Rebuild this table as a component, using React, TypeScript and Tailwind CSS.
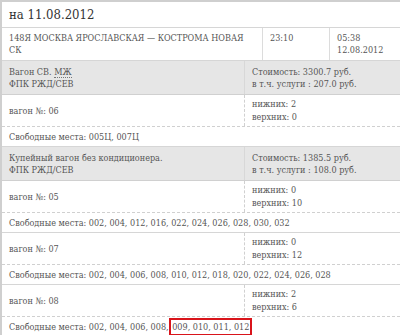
import React from 'react';

interface Car {
  num: string;
  lower: number;
  upper: number;
  seats: string[];
  marked?: string[];
}

interface CarClass {
  title: React.ReactNode;
  carrier: string;
  price: string;
  service: string;
  cars: Car[];
}

const classes: CarClass[] = [
  {
    title: (
      <>
        Вагон СВ.{' '}
        <span className="border-b border-dotted border-[#777]">МЖ</span>
      </>
    ),
    carrier: 'ФПК РЖД/СЕВ',
    price: '3300.7',
    service: '207.0',
    cars: [{ num: '06', lower: 2, upper: 0, seats: ['005Ц', '007Ц'] }],
  },
  {
    title: 'Купейный вагон без кондиционера.',
    carrier: 'ФПК РЖД/СЕВ',
    price: '1385.5',
    service: '108.0',
    cars: [
      {
        num: '05',
        lower: 0,
        upper: 10,
        seats: ['002', '004', '012', '016', '022', '024', '026', '028', '030', '032'],
      },
      {
        num: '07',
        lower: 0,
        upper: 12,
        seats: ['002', '004', '006', '008', '010', '012', '018', '020', '022', '024', '026', '028'],
      },
      {
        num: '08',
        lower: 2,
        upper: 6,
        seats: ['002', '004', '006', '008'],
        marked: ['009', '010', '011', '012'],
      },
    ],
  },
];

export default function App() {
  return (
    <div
      className="w-[400px] h-[335px] overflow-hidden bg-white text-[#555] text-[9px] leading-[12px] border-l-2 border-t-2 border-[#cfcfcf]"
      style={{ fontFamily: '"DejaVu Serif Condensed", "DejaVu Serif", serif' }}
    >
      {/* Date header */}
      <div className="h-[26px] flex items-center px-[7px] text-[13px] text-[#333] border-b border-[#d6d6d6]">
        на 11.08.2012
      </div>

      {/* Train */}
      <div className="flex border-b border-[#d6d6d6]">
        <div className="w-[261px] px-[7px] py-[4px] border-r border-[#dcdcdc]">
          148Я МОСКВА ЯРОСЛАВСКАЯ — КОСТРОМА НОВАЯ СК
        </div>
        <div className="w-[67px] px-[7px] py-[4px] border-r border-[#dcdcdc]">23:10</div>
        <div className="flex-1 px-[7px] py-[4px]">
          05:38
          <br />
          12.08.2012
        </div>
      </div>

      {classes.map((c, i) => (
        <div key={i}>
          <div className="flex bg-[#e6e6e6] border-b border-[#d0d0d0]">
            <div className="w-[243px] px-[7px] py-[4.5px] border-r border-[#d8d8d8]">
              {c.title}
              <br />
              {c.carrier}
            </div>
            <div className="flex-1 px-[7px] py-[4.5px]">
              Стоимость: {c.price} руб.
              <br />в т.ч. услуги : {c.service} руб.
            </div>
          </div>

          {c.cars.map((car) => (
            <div key={car.num}>
              <div className="flex border-b border-dashed border-[#d0d0d0]">
                <div className="w-[243px] px-[7px] flex items-center border-r border-dashed border-[#d0d0d0]">
                  вагон №: {car.num}
                </div>
                <div className="flex-1 px-[7px] py-[3px] leading-[12.5px]">
                  нижних: {car.lower}
                  <br />
                  верхних: {car.upper}
                </div>
              </div>
              <div className="px-[7px] py-[3.5px] border-b border-[#d6d6d6] whitespace-nowrap">
                Свободные места: {car.seats.join(', ')}
                {car.marked && (
                  <>
                    ,{' '}
                    <span className="outline-2 outline-[#d9141b] px-[1px] py-[2px]">
                      {car.marked.join(', ')}
                    </span>
                  </>
                )}
              </div>
            </div>
          ))}
        </div>
      ))}
    </div>
  );
}
